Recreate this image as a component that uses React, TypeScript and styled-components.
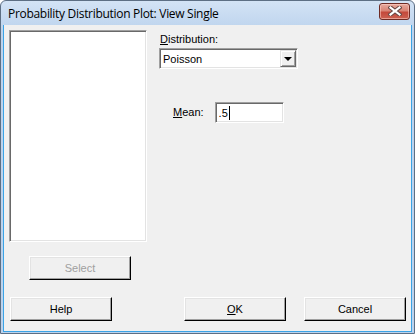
import React from "react";
import styled, { createGlobalStyle } from "styled-components";

const GlobalStyle = createGlobalStyle`
  html, body { margin: 0; padding: 0; background: #ffffff; }
  body { font-family: "Liberation Sans", Arial, sans-serif; }
  * { box-sizing: border-box; }
`;

const Window = styled.div`
  width: 415px;
  height: 334px;
  display: flex;
  flex-direction: column;
  background: linear-gradient(#d3e3f5, #bcd3ed 30px, #bcd3ed);
  border: 1px solid #5d6f84;
  border-radius: 6px 6px 0 0;
  padding: 0 2px 0 1px;
  overflow: hidden;
`;

const TitleBar = styled.div`
  height: 24px;
  flex: none;
  display: flex;
  align-items: center;
  justify-content: space-between;
  padding: 0 2px 0 6px;
`;

const Title = styled.span`
  font-family: "Open Sans", "Noto Sans", sans-serif;
  font-size: 12px;
  color: #000;
  letter-spacing: -0.3px;
`;

const CloseButton = styled.div`
  width: 31px;
  height: 17px;
  margin-top: -4px;
  border: 1px solid #6e2b24;
  border-radius: 3px;
  background: linear-gradient(#e7aa9e 0%, #d98475 45%, #c4493b 55%, #cc6151 100%);
  box-shadow: inset 0 0 0 1px rgba(255, 210, 200, 0.55);
  display: flex;
  align-items: center;
  justify-content: center;
`;

const Client = styled.div`
  flex: 1;
  background: #f0f0f0;
  border: 1px solid #3aa3e6;
  border-top: none;
  margin-left: 1px;
  margin-bottom: 1px;
  padding: 5px 5px 0 5px;
  display: flex;
  flex-direction: column;
  font-size: 11px;
  color: #000;
`;

const TopSection = styled.div`
  display: flex;
  gap: 12px;
`;

const LeftColumn = styled.div`
  width: 138px;
  display: flex;
  flex-direction: column;
  gap: 14px;
`;

const sunken = `
  border-style: solid;
  border-width: 1px;
  border-color: #a0a0a0 #ffffff #ffffff #a0a0a0;
  box-shadow: inset 1px 1px 0 #696969, inset -1px -1px 0 #e3e3e3;
  background: #ffffff;
`;

const ListBox = styled.div`
  ${sunken}
  height: 212px;
`;

const Button = styled.button<{ $disabled?: boolean }>`
  width: 102px;
  height: 24px;
  font-family: "Liberation Sans", Arial, sans-serif;
  font-size: 11px;
  color: ${(p) => (p.$disabled ? "#a0a0a0" : "#000")};
  background: #f0f0f0;
  border-style: solid;
  border-width: 1px;
  border-color: #ffffff #000000 #000000 #ffffff;
  box-shadow: inset -1px -1px 0 #a0a0a0, inset 1px 1px 0 #e3e3e3;
  padding: 0;
  margin: 0;
  display: flex;
  align-items: center;
  justify-content: center;
`;

const SelectButton = styled(Button)`
  margin-left: 20px;
`;

const RightColumn = styled.div`
  display: flex;
  flex-direction: column;
  padding-top: 3px;
`;

const Label = styled.label`
  line-height: 13px;
  padding-left: 1px;
`;

const U = styled.span`
  text-decoration: underline;
  text-underline-offset: 1px;
`;

const Combo = styled.div`
  ${sunken}
  margin-top: 2px;
  width: 139px;
  height: 21px;
  display: flex;
  align-items: center;
  justify-content: space-between;
  padding: 0 1px 0 3px;
`;

const DropButton = styled.div`
  width: 16px;
  height: 17px;
  background: #f0f0f0;
  border-style: solid;
  border-width: 1px;
  border-color: #e3e3e3 #696969 #696969 #e3e3e3;
  box-shadow: inset 1px 1px 0 #ffffff, inset -1px -1px 0 #a0a0a0;
  display: flex;
  align-items: center;
  justify-content: center;
`;

const Arrow = styled.div`
  width: 0;
  height: 0;
  border-left: 4px solid transparent;
  border-right: 4px solid transparent;
  border-top: 4px solid #000;
  margin-top: 1px;
`;

const MeanRow = styled.div`
  margin-top: 33px;
  display: flex;
  align-items: center;
  gap: 11px;
  padding-left: 13px;
`;

const TextBox = styled.div`
  ${sunken}
  width: 69px;
  height: 21px;
  display: flex;
  align-items: center;
  padding-left: 3px;
`;

const Caret = styled.span`
  display: inline-block;
  width: 1px;
  height: 14px;
  background: #000;
  margin-left: 1px;
`;

const BottomRow = styled.div`
  margin-top: 17px;
  padding-left: 1px;
  display: flex;
  justify-content: space-between;
`;

const ButtonGroup = styled.div`
  display: flex;
  gap: 18px;
`;

export default function App() {
  return (
    <>
      <GlobalStyle />
      <Window>
        <TitleBar>
          <Title>Probability Distribution Plot: View Single</Title>
          <CloseButton>
            <svg width="14" height="10" viewBox="0 0 14 10">
              <path d="M2.5 1.5 L11.5 8.5 M11.5 1.5 L2.5 8.5" stroke="#6b4a46" strokeWidth="4.2" strokeLinecap="square" />
              <path d="M2.5 1.5 L11.5 8.5 M11.5 1.5 L2.5 8.5" stroke="#ffffff" strokeWidth="2.2" strokeLinecap="square" />
            </svg>
          </CloseButton>
        </TitleBar>
        <Client>
          <TopSection>
            <LeftColumn>
              <ListBox />
              <SelectButton $disabled>Select</SelectButton>
            </LeftColumn>
            <RightColumn>
              <Label>
                <U>D</U>istribution:
              </Label>
              <Combo>
                <span>Poisson</span>
                <DropButton>
                  <Arrow />
                </DropButton>
              </Combo>
              <MeanRow>
                <Label>
                  <U>M</U>ean:
                </Label>
                <TextBox>
                  .5
                  <Caret />
                </TextBox>
              </MeanRow>
            </RightColumn>
          </TopSection>
          <BottomRow>
            <Button>Help</Button>
            <ButtonGroup>
              <Button>
                <U>O</U>K
              </Button>
              <Button>Cancel</Button>
            </ButtonGroup>
          </BottomRow>
        </Client>
      </Window>
    </>
  );
}
